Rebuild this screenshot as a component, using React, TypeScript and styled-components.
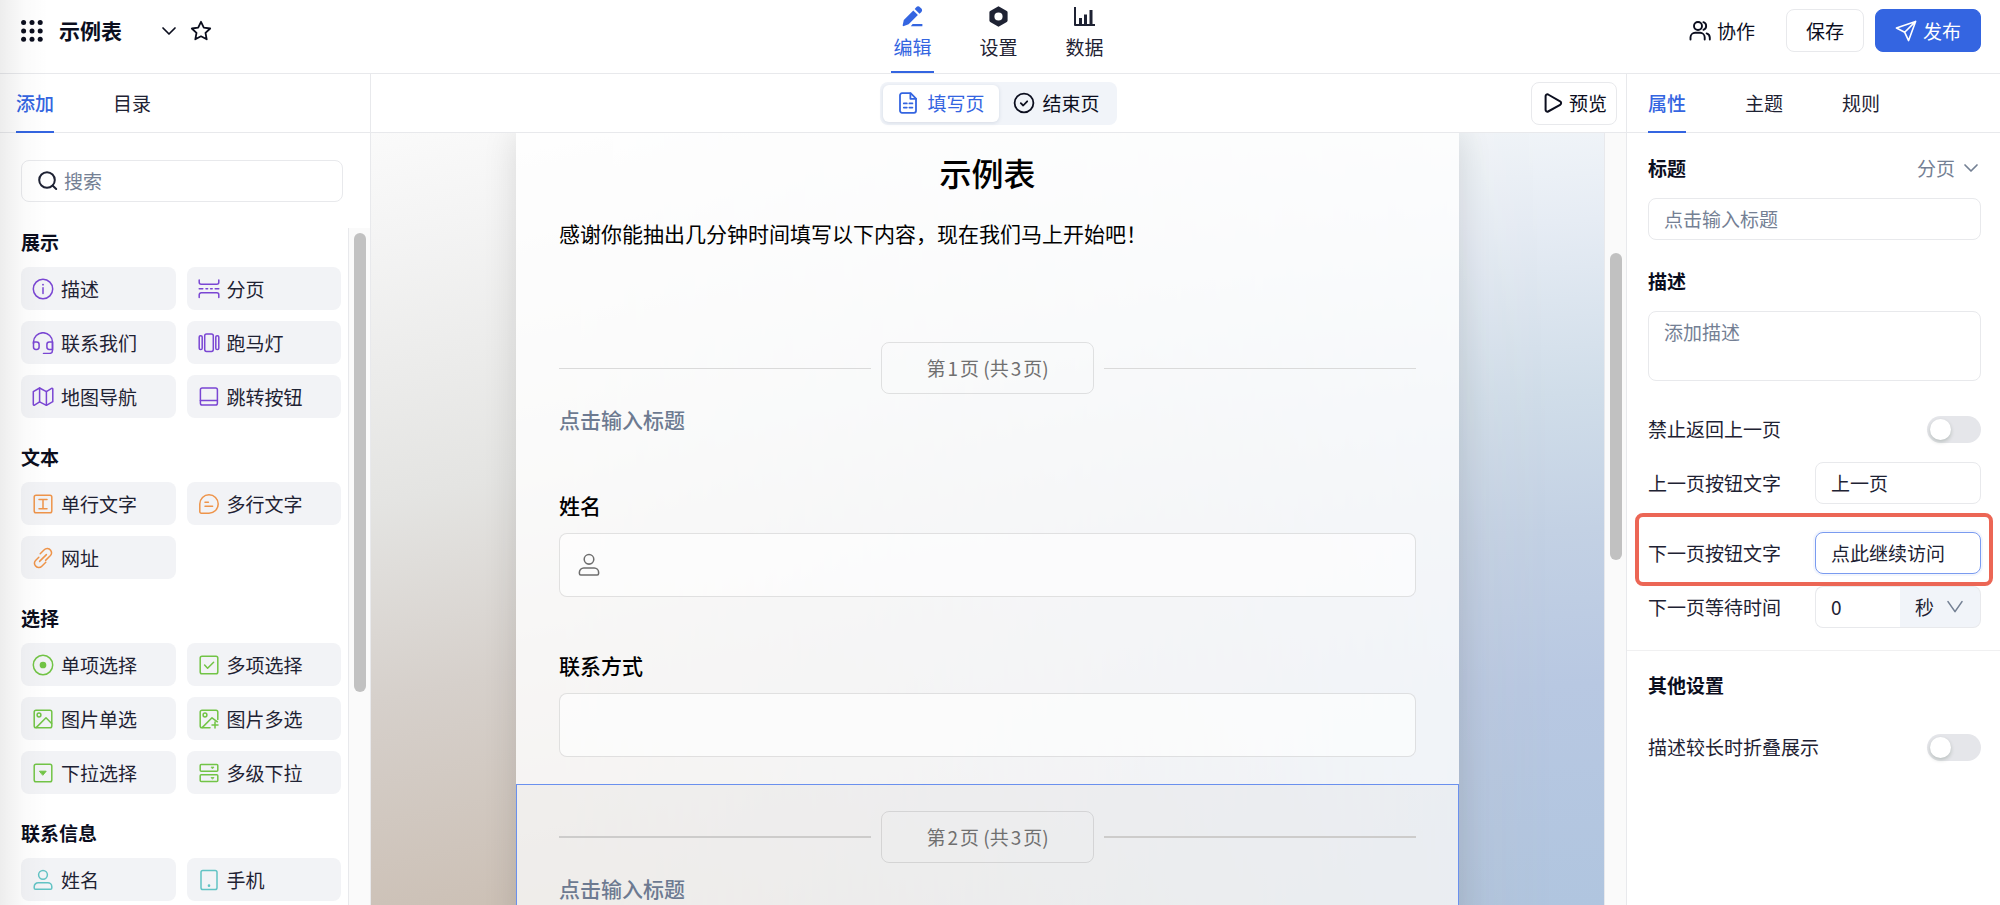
import React, { ReactNode, useState } from "react";
import styled, { createGlobalStyle, css } from "styled-components";

const color = {
  text: "#1e2233",
  strong: "#0b0e1e",
  muted: "#748094",
  primary: "#3465e1",
  line: "#e8e9ec",
  tile: "#f2f3f6",
  soft: "#f1f4f9",
  mark: "#ec6655",
  purple: "#7a46d3",
  orange: "#ee944a",
  green: "#72c446",
  teal: "#62c3c4",
};

const GlobalStyle = createGlobalStyle`
  * { box-sizing: border-box; }
  body { margin: 0; }
  body, button, input, textarea, select {
    font-family: "Noto Sans CJK SC", sans-serif;
    font-size: 19px;
    line-height: 28px;
    color: ${color.text};
  }
  h1, h2, h3, p { margin: 0; }
  button { cursor: pointer; }
`;

/* ---------- shell ---------- */

const Shell = styled.div`
  position: relative;
  display: flex;
  flex-direction: column;
  height: 100vh;
  overflow: hidden;
  background: #fff;

  &::after {
    content: "";
    position: absolute;
    inset: 0 auto 0 0;
    width: 48px;
    pointer-events: none;
    background: linear-gradient(to right, rgba(0, 0, 0, 0.07), rgba(0, 0, 0, 0.02) 50%, transparent);
  }
`;

const Header = styled.header`
  display: grid;
  grid-template-columns: 1fr auto 1fr;
  flex: none;
  height: 74px;
  padding: 0 19px 0 16px;
  border-bottom: 1px solid ${color.line};
`;

const HeaderLeft = styled.div`
  display: flex;
  align-items: center;
  align-self: start;
  height: 62px;
  padding-left: 5px;
`;

const HeaderRight = styled.div`
  display: flex;
  align-items: center;
  align-self: start;
  justify-content: flex-end;
  gap: 11px;
  height: 61px;
`;

const AppName = styled.h1`
  margin: 0 34px 2px 16px;
  font-size: 21px;
  font-weight: 600;
  color: ${color.strong};
`;

const IconButton = styled.button`
  display: flex;
  align-items: center;
  justify-content: center;
  padding: 0 5px;
  border: 0;
  background: none;
  color: ${color.strong};
`;

const MainNav = styled.nav`
  display: flex;
  gap: 43px;
`;

const NavItem = styled.button<{ $active?: boolean }>`
  display: flex;
  flex-direction: column;
  align-items: center;
  gap: 6px;
  width: 43px;
  padding: 6px 0 0;
  border: 0;
  border-bottom: 2px solid ${(p) => (p.$active ? color.primary : "transparent")};
  background: none;
  white-space: nowrap;
  color: ${(p) => (p.$active ? color.primary : color.text)};
`;

const Button = styled.button<{ $kind?: "plain" | "primary" | "text" }>`
  display: flex;
  align-items: center;
  justify-content: center;
  gap: 6px;
  height: 43px;
  padding: 0 19px;
  border: 1px solid ${color.line};
  border-radius: 8px;
  background: #fff;
  color: ${color.strong};
  ${(p) =>
    p.$kind === "primary" &&
    css`
      border-color: ${color.primary};
      background: ${color.primary};
      color: #fff;
    `}
  ${(p) =>
    p.$kind === "text" &&
    css`
      border-color: transparent;
    `}
`;

const Body = styled.div`
  display: flex;
  flex: 1;
  min-height: 0;
`;

const TabBar = styled.div<{ $inset: number }>`
  display: flex;
  flex: none;
  gap: 59px;
  height: 59px;
  padding-left: ${(p) => p.$inset}px;
  border-bottom: 1px solid ${color.line};
`;

const Tab = styled.button<{ $active?: boolean }>`
  margin-bottom: -1px;
  padding: 0;
  border: 0;
  border-bottom: 2px solid ${(p) => (p.$active ? color.primary : "transparent")};
  background: none;
  color: ${(p) => (p.$active ? color.primary : color.text)};
  font-weight: ${(p) => (p.$active ? 500 : 400)};
`;

const ScrollTrack = styled.div`
  flex: none;
  width: 22px;
  padding-left: 5px;
  border-left: 1px solid ${color.line};
  background: #fafafa;
`;

const ScrollThumb = styled.div<{ $top: number; $length: number }>`
  width: 12px;
  height: ${(p) => p.$length}px;
  margin-top: ${(p) => p.$top}px;
  border-radius: 6px;
  background: #c1c1c1;
`;

/* ---------- left palette ---------- */

const Sidebar = styled.aside`
  display: flex;
  flex-direction: column;
  flex: none;
  width: 371px;
  border-right: 1px solid ${color.line};
`;

const SearchBox = styled.label`
  display: flex;
  align-items: center;
  flex: none;
  gap: 6px;
  height: 42px;
  margin: 27px 27px 26px 21px;
  padding: 0 16px;
  border: 1px solid ${color.line};
  border-radius: 8px;
`;

const SearchInput = styled.input`
  flex: 1;
  min-width: 0;
  padding: 0;
  border: 0;
  outline: 0;
  background: none;
  &::placeholder { color: ${color.muted}; }
`;

const PaletteScroll = styled.div`
  display: flex;
  flex: 1;
  min-height: 0;
`;

const PaletteList = styled.div`
  display: flex;
  flex-direction: column;
  flex: 1;
  gap: 25px;
  padding: 0 7px 0 21px;
  overflow: hidden;
`;

const PaletteGroup = styled.section`
  flex: none;
`;

const GroupTitle = styled.h2`
  margin-bottom: 11px;
  font-size: 19px;
  line-height: 28px;
  font-weight: 600;
  color: ${color.strong};
`;

const TileGrid = styled.div`
  display: grid;
  grid-template-columns: 1fr 1fr;
  gap: 11px;
`;

const Tile = styled.button`
  display: flex;
  align-items: center;
  gap: 7px;
  height: 43px;
  padding: 0 11px;
  border: 0;
  border-radius: 8px;
  background: ${color.tile};
  white-space: nowrap;
`;

/* ---------- centre ---------- */

const Center = styled.main`
  display: flex;
  flex-direction: column;
  flex: 1;
  min-width: 0;
`;

const ModeBar = styled.div`
  display: grid;
  grid-template-columns: 1fr auto 1fr;
  align-items: center;
  flex: none;
  height: 59px;
  padding: 0 9px;
  border-bottom: 1px solid ${color.line};
`;

const ModeSwitch = styled.div`
  display: flex;
  grid-column: 2;
  height: 43px;
  padding: 3px;
  border-radius: 8px;
  background: ${color.soft};
`;

const ModeButton = styled.button<{ $active?: boolean }>`
  display: flex;
  align-items: center;
  gap: 8px;
  padding: 0 14px;
  border: 0;
  border-radius: 6px;
  background: ${(p) => (p.$active ? "#fff" : "transparent")};
  box-shadow: ${(p) => (p.$active ? "0 1px 4px rgba(20, 40, 80, 0.12)" : "none")};
  color: ${(p) => (p.$active ? color.primary : color.strong)};
`;

const PreviewButton = styled(Button)`
  justify-self: end;
  padding: 0 9px;
`;

const CanvasArea = styled.div`
  display: flex;
  flex: 1;
  min-height: 0;
`;

const Canvas = styled.div`
  position: relative;
  isolation: isolate;
  flex: 1;
  min-width: 0;
  padding: 0 145px;
  overflow: hidden;
  background: linear-gradient(
    176deg,
    #f6f9fb 0%,
    #f0f4f8 9%,
    #e6ecf4 20%,
    #d0dde9 40%,
    #c3d1e4 56%,
    #b8c8e2 74%,
    #b0c5df 100%
  );

  &::before {
    content: "";
    position: absolute;
    z-index: -1;
    inset: 0;
    background: linear-gradient(
      168deg,
      #fafafa 0%,
      #f4f4f4 10%,
      #e4e4e2 36%,
      #d6d0cb 55%,
      #cdc2b8 75%,
      #c6b7a5 92%,
      #c2b29f 100%
    );
    mask-image: linear-gradient(to right, #000 15%, transparent 96%);
  }
`;

const Form = styled.form`
  min-height: 100%;
  background: rgba(255, 255, 255, 0.8);
  box-shadow: 0 0 32px rgba(0, 0, 0, 0.12);
`;

const FormIntro = styled.section`
  display: flex;
  flex-direction: column;
  gap: 21px;
  padding: 15px 43px 66px;
`;

const FormTitle = styled.h2`
  font-size: 32px;
  line-height: 48px;
  font-weight: 500;
  text-align: center;
  color: #000;
`;

const FormText = styled.p`
  font-size: 21px;
  line-height: 32px;
  color: #000;
`;

const PageSection = styled.section<{ $selected?: boolean }>`
  display: flex;
  flex-direction: column;
  gap: 9px;
  padding: 27px 43px 29px;
  ${(p) =>
    p.$selected &&
    css`
      box-shadow: inset 0 0 0 1px #6a90ee;
      background: rgba(0, 0, 0, 0.024);
    `}
`;

const PageMark = styled.div<{ $selected?: boolean }>`
  display: flex;
  align-items: center;
  gap: 10px;

  &::before,
  &::after {
    content: "";
    flex: 1;
    height: ${(p) => (p.$selected ? 2 : 1)}px;
    background: ${(p) => (p.$selected ? "#cdcccb" : "#dadada")};
  }
`;

const PageBadge = styled.div`
  padding: 11px 44px;
  border: 1px solid rgba(0, 0, 0, 0.1);
  border-radius: 8px;
  color: #707070;
`;

const PageNumber = styled.span`
  margin: 0 2px;
`;

const PageTitle = styled.h3`
  font-size: 21px;
  line-height: 32px;
  font-weight: 500;
  color: #6d7a91;
`;

const Field = styled.label`
  display: flex;
  flex-direction: column;
  gap: 12px;
  padding: 25px 43px 27px;
`;

const FieldName = styled.span`
  font-size: 21px;
  line-height: 32px;
  font-weight: 500;
  color: #000;
`;

const FieldBox = styled.span`
  display: flex;
  align-items: center;
  gap: 10px;
  height: 64px;
  padding: 0 17px;
  border: 1px solid rgba(0, 0, 0, 0.11);
  border-radius: 8px;
  background: rgba(255, 255, 255, 0.6);
  color: #6e6e6e;
`;

/* ---------- right inspector ---------- */

const Inspector = styled.aside`
  display: flex;
  flex-direction: column;
  flex: none;
  width: 374px;
  border-left: 1px solid ${color.line};
`;

const Panel = styled.section`
  display: flex;
  flex-direction: column;
  gap: 12px;
  padding: 21px 19px 22px 21px;
  & + & {
    gap: 27px;
    padding-top: 20px;
    border-top: 1px solid #f0f0f1;
  }
`;

const PanelHead = styled.div`
  display: flex;
  align-items: center;
  justify-content: space-between;
`;

const PanelLabel = styled.label`
  font-weight: 600;
  color: ${color.strong};
`;

const PanelTitle = styled.h2`
  font-size: 19px;
  line-height: 28px;
  font-weight: 600;
  color: ${color.strong};
`;

const KindButton = styled.button`
  display: flex;
  align-items: center;
  gap: 8px;
  padding: 0 2px;
  border: 0;
  background: none;
  color: ${color.muted};
`;

const inputStyle = css`
  width: 100%;
  padding: 0 15px 1px;
  border: 1px solid ${color.line};
  border-radius: 8px;
  outline: 0;
  background: #fff;
  &::placeholder { color: ${color.muted}; opacity: 1; }
`;

const TextInput = styled.input<{ $focused?: boolean }>`
  ${inputStyle}
  height: 42px;
  ${(p) =>
    p.$focused &&
    css`
      border-color: #7a9bf0;
      box-shadow: 0 0 0 2px rgba(52, 101, 225, 0.06);
    `}
`;

const TextArea = styled.textarea`
  ${inputStyle}
  display: block;
  height: 70px;
  padding-top: 6px;
  resize: none;
`;

const Group = styled.div`
  display: flex;
  flex-direction: column;
  gap: 16px;
  margin-bottom: 15px;
`;

const Row = styled.div<{ $marked?: boolean }>`
  position: relative;
  display: flex;
  align-items: center;
  justify-content: space-between;
  min-height: 42px;
  ${(p) =>
    p.$marked &&
    css`
      margin-top: 16px;
      &::after {
        content: "";
        position: absolute;
        inset: -19px -12px -12px -13px;
        border: 4px solid ${color.mark};
        border-radius: 8px;
        pointer-events: none;
      }
    `}
`;

const Control = styled.div`
  display: flex;
  width: 166px;
`;

const NumberInput = styled(TextInput)`
  flex: 1;
  width: 0;
  border-right: 0;
  border-radius: 8px 0 0 8px;
`;

const UnitBox = styled.div`
  position: relative;
  display: flex;
  width: 81px;
  svg {
    position: absolute;
    right: 17px;
    top: 12px;
    color: ${color.muted};
    pointer-events: none;
  }
`;

const UnitSelect = styled.select`
  width: 100%;
  padding: 0 15px;
  border: 1px solid ${color.line};
  border-left: 0;
  border-radius: 0 8px 8px 0;
  outline: 0;
  appearance: none;
  background: ${color.soft};
`;

const Switch = styled.input`
  appearance: none;
  flex: none;
  width: 54px;
  height: 27px;
  margin: 0;
  padding: 3px;
  border-radius: 14px;
  background: #e5e6ea;
  cursor: pointer;

  &::before {
    content: "";
    display: block;
    width: 21px;
    height: 21px;
    border-radius: 50%;
    background: #fff;
    box-shadow: 0 2px 4px rgba(0, 35, 11, 0.2);
  }
  &:checked { background: ${color.primary}; }
  &:checked::before { margin-left: auto; }
`;

/* ---------- icons ---------- */

const Svg = styled.svg`
  display: block;
  flex: none;
  fill: none;
  stroke: currentColor;
  stroke-linecap: round;
  stroke-linejoin: round;
`;

function Icon({ size = 22, box = 22, tint, weight = 1.5, children }: {
  size?: number; box?: number; tint?: string; weight?: number; children: ReactNode;
}) {
  return (
    <Svg width={size} height={size} viewBox={`0 0 ${box} ${box}`} color={tint} strokeWidth={weight} aria-hidden="true">
      {children}
    </Svg>
  );
}

const person = (
  <>
    <circle cx="11" cy="5.8" r="4.4" />
    <path d="M2.2 18.9v-1.2a4 4 0 0 1 4-4h9.6a4 4 0 0 1 4 4v1.2a1.3 1.3 0 0 1-1.3 1.3H3.5a1.3 1.3 0 0 1-1.3-1.3z" />
  </>
);
const square = <rect x="2.2" y="2.2" width="17.6" height="17.6" rx="1.8" />;

const glyphs: Record<string, ReactNode> = {
  info: (<><circle cx="11" cy="11" r="9.7" /><path d="M11 9.8v5.6" /><path d="M11 6.6v.1" strokeWidth="1.8" /></>),
  pageBreak: (
    <>
      <path d="M1.2 2v2.2a2 2 0 0 0 2 2h15.6a2 2 0 0 0 2-2V2" />
      <path d="M1.2 19.4v-2.6a2 2 0 0 1 2-2h15.6a2 2 0 0 1 2 2v2.6" />
      <path d="M1.2 10.8h3.6M8 10.8h1.6M12.6 10.8h1.6M17.2 10.8h3.6" />
    </>
  ),
  headset: (
    <>
      <path d="M1.5 11.5V10a9.5 9.3 0 0 1 19 0v8.4a3 3 0 0 1-3 3H11.5" />
      <path d="M1.5 10h3.2a2.4 2.4 0 0 1 2.4 2.4v2.7a2.4 2.4 0 0 1-2.4 2.4H3.9a2.4 2.4 0 0 1-2.4-2.4z" />
      <path d="M20.5 10h-3.2a2.4 2.4 0 0 0-2.4 2.4v2.7a2.4 2.4 0 0 0 2.4 2.4h3.2z" />
    </>
  ),
  carousel: (<><rect x="6.7" y="2" width="8.6" height="17.4" rx="1.8" /><rect x="1.2" y="3.8" width="3" height="13.8" rx="1.3" /><rect x="17.8" y="3.8" width="3" height="13.8" rx="1.3" /></>),
  map: (<><path d="M1.3 5.6 7.6 2l6.8 3.6L19.6 2.4a.8.8 0 0 1 1.2.7v12.6l-6.4 3.6-6.8-3.4-5.1 3.2a.8.8 0 0 1-1.2-.7z" /><path d="M7.6 2v13.9M14.4 5.6v13.7" /></>),
  panelBottom: (<><rect x="2.4" y="2" width="17" height="17" rx="1.8" /><path d="M2.4 14.6h17" /></>),
  inputText: (<>{square}<path d="M7 6.4h8M7 15.8h8M11 6.4v9.4" /></>),
  bubble: (<><path d="M1.8 11A9.2 9.2 0 1 1 11 20.2H3.3a1.5 1.5 0 0 1-1.5-1.5z" /><path d="M7 9.3h3.4M7 13.3h7.6" /></>),
  link: (
    <>
      <path d="m8.2 6.8 4-4a4.1 4.1 0 0 1 6.4.4 4.4 4.4 0 0 1-.4 5.6l-4.6 4.6" />
      <path d="m13.8 15.2-4 4a4.1 4.1 0 0 1-6.4-.4 4.4 4.4 0 0 1 .4-5.6l3-3" />
      <path d="m7.6 14.4 6.8-6.8" />
    </>
  ),
  radio: (<><circle cx="11" cy="11" r="9.7" /><circle cx="11" cy="11" r="2.6" fill="currentColor" /></>),
  check: (<>{square}<path d="m6.6 11 3 3.2 6-6" /></>),
  image: (<>{square}<circle cx="7" cy="7" r="1.9" /><path d="m4.4 19.4 9.6-9.6 5.6 5.8" /></>),
  imagePlus: (
    <>
      <path d="M19.8 11.5V4a1.8 1.8 0 0 0-1.8-1.8H4A1.8 1.8 0 0 0 2.2 4v14A1.8 1.8 0 0 0 4 19.8h8" />
      <circle cx="7" cy="7" r="1.9" />
      <path d="m4.4 19.4 9.6-9.6 5.4 4M17 14v6M14 17h6" />
    </>
  ),
  dropdown: (<>{square}<path d="M7.8 9.2h6.4L11 13z" fill="currentColor" strokeWidth="1" /></>),
  cascade: (
    <>
      <rect x="2.2" y="2.4" width="17.6" height="6.8" rx="1" />
      <rect x="2.2" y="12.8" width="17.6" height="6.8" rx="1" />
      <path d="M13.4 5.1h2.6l-1.3 1.5zM13.4 15.5h2.6L14.7 17z" fill="currentColor" strokeWidth="0.8" />
    </>
  ),
  person,
  phone: (<><rect x="3" y="1.4" width="16" height="19.2" rx="1.8" /><path d="M11 16.6v.1" strokeWidth="2.6" /></>),
};

const palette = [
  { title: "展示", tint: color.purple, items: [["info", "描述"], ["pageBreak", "分页"], ["headset", "联系我们"], ["carousel", "跑马灯"], ["map", "地图导航"], ["panelBottom", "跳转按钮"]] },
  { title: "文本", tint: color.orange, items: [["inputText", "单行文字"], ["bubble", "多行文字"], ["link", "网址"]] },
  { title: "选择", tint: color.green, items: [["radio", "单项选择"], ["check", "多项选择"], ["image", "图片单选"], ["imagePlus", "图片多选"], ["dropdown", "下拉选择"], ["cascade", "多级下拉"]] },
  { title: "联系信息", tint: color.teal, items: [["person", "姓名"], ["phone", "手机"]] },
];

function PageBreak({ page, total, selected }: { page: number; total: number; selected?: boolean }) {
  return (
    <PageSection $selected={selected}>
      <PageMark $selected={selected}>
        <PageBadge>
          第<PageNumber>{page}</PageNumber>页 (共<PageNumber>{total}</PageNumber>页)
        </PageBadge>
      </PageMark>
      <PageTitle>点击输入标题</PageTitle>
    </PageSection>
  );
}

function TopBar() {
  return (
    <Header>
      <HeaderLeft>
        <Icon>
          {[2.6, 11, 19.2].map((y) =>
            [2.6, 11, 19.2].map((x) => (
              <circle key={`${x}-${y}`} cx={x} cy={y} r="2.5" fill={color.strong} stroke="none" />
            ))
          )}
        </Icon>
        <AppName>示例表</AppName>
        <IconButton aria-label="展开">
          <Icon size={16} box={16} weight={1.7}><path d="m2 5 6 6 6-6" /></Icon>
        </IconButton>
        <IconButton aria-label="收藏">
          <Icon size={28} box={28} weight={1.8}>
            <path d="m14 4.8 2.8 5.8 6.4.9-4.7 4.4 1.2 6.4-5.7-3-5.7 3 1.2-6.4-4.7-4.4 6.4-.9z" />
          </Icon>
        </IconButton>
      </HeaderLeft>
      <MainNav>
        <NavItem $active>
          <Icon size={21} box={21}>
            <g fill="currentColor" stroke="none">
              <path d="M1.3 20.2.6 19.6l1.2-5.6L11.3 4.4l4.6 4.6-9.3 9.3z" />
              <path d="m12.7 3 1.3-1.6a3 3 0 0 1 4.2 0l1 .9a3 3 0 0 1 0 4L17.5 7.7z" />
              <path d="M10.6 18.1h9.8v2.1H8.8z" />
            </g>
          </Icon>
          编辑
        </NavItem>
        <NavItem>
          <Icon size={21} box={21}>
            <path fill="currentColor" stroke="none" fillRule="evenodd" d="M10.5.2 18.8 5a1.6 1.6 0 0 1 .8 1.4v8.2a1.6 1.6 0 0 1-.8 1.4l-8.3 4.8L2.2 16a1.6 1.6 0 0 1-.8-1.4V6.4A1.6 1.6 0 0 1 2.2 5zm0 6.2a4.1 4.1 0 1 0 0 8.2 4.1 4.1 0 0 0 0-8.2z" />
          </Icon>
          设置
        </NavItem>
        <NavItem>
          <Icon size={21} box={21}>
            <path d="M1 2v17h19" strokeWidth="2" strokeLinecap="square" />
            <path d="M6.5 18v-6M11.5 18V8.6M17 18V4" strokeWidth="3" strokeLinecap="butt" />
          </Icon>
          数据
        </NavItem>
      </MainNav>
      <HeaderRight>
        <Button $kind="text">
          <Icon weight={1.9}>
            <circle cx="9" cy="6" r="4" />
            <path d="M1.5 19.5v-2.3a4.6 4.6 0 0 1 4.6-4.4h5a4.6 4.6 0 0 1 4.6 4.4v2.3M14.4 2.2a4 4 0 0 1 0 7.6M17.6 13.4a4.6 4.6 0 0 1 3.2 4.2v1.9" />
          </Icon>
          协作
        </Button>
        <Button>保存</Button>
        <Button $kind="primary">
          <Icon weight={1.6}>
            <path d="M20.6 1.4 1.4 8l8.3 4.3 3.9 8.3zM9.7 12.3 20.6 1.4" />
          </Icon>
          发布
        </Button>
      </HeaderRight>
    </Header>
  );
}

function ElementPalette() {
  return (
    <Sidebar>
      <TabBar $inset={16}>
        <Tab $active>添加</Tab>
        <Tab>目录</Tab>
      </TabBar>
      <SearchBox>
        <Icon size={20} box={20} weight={2}><circle cx="9" cy="9" r="7.8" /><path d="m14.8 14.8 3.4 3.2" /></Icon>
        <SearchInput placeholder="搜索" aria-label="搜索" />
      </SearchBox>
      <PaletteScroll>
        <PaletteList>
          {palette.map((group) => (
            <PaletteGroup key={group.title}>
              <GroupTitle>{group.title}</GroupTitle>
              <TileGrid>
                {group.items.map(([glyph, name]) => (
                  <Tile key={name}>
                    <Icon tint={group.tint}>{glyphs[glyph]}</Icon>
                    {name}
                  </Tile>
                ))}
              </TileGrid>
            </PaletteGroup>
          ))}
        </PaletteList>
        <ScrollTrack><ScrollThumb $top={5} $length={459} /></ScrollTrack>
      </PaletteScroll>
    </Sidebar>
  );
}

function Editor() {
  return (
    <Center>
      <ModeBar>
        <ModeSwitch>
          <ModeButton $active>
            <Icon>
              <path d="M3 3.2a2 2 0 0 1 2-2h8.6L19 6.6v12.2a2 2 0 0 1-2 2H5a2 2 0 0 1-2-2z" strokeWidth="1.8" />
              <path d="M13.4 1.4v5.4H19M6.8 11.4h3M12.4 11.4h3M6.8 15.6h3M12.4 15.6h3" strokeWidth="1.8" />
            </Icon>
            填写页
          </ModeButton>
          <ModeButton>
            <Icon weight={1.8}><circle cx="11" cy="11" r="9.4" /><path d="m7.8 11.2 2.4 2.3 4-4.2" /></Icon>
            结束页
          </ModeButton>
        </ModeSwitch>
        <PreviewButton>
          <Icon weight={2}>
            <path d="M4.6 4v14a1.7 1.7 0 0 0 2.5 1.5l12-6.7a2 2 0 0 0 0-3.5l-12-6.8A1.7 1.7 0 0 0 4.6 4z" />
          </Icon>
          预览
        </PreviewButton>
      </ModeBar>
      <CanvasArea>
        <Canvas>
          <Form>
            <FormIntro>
              <FormTitle>示例表</FormTitle>
              <FormText>感谢你能抽出几分钟时间填写以下内容，现在我们马上开始吧！</FormText>
            </FormIntro>
            <PageBreak page={1} total={3} />
            <Field>
              <FieldName>姓名</FieldName>
              <FieldBox>
                <Icon size={24} weight={1.4}>{person}</Icon>
                <SearchInput aria-label="姓名" />
              </FieldBox>
            </Field>
            <Field>
              <FieldName>联系方式</FieldName>
              <FieldBox><SearchInput aria-label="联系方式" /></FieldBox>
            </Field>
            <PageBreak page={2} total={3} selected />
          </Form>
        </Canvas>
        <ScrollTrack><ScrollThumb $top={120} $length={307} /></ScrollTrack>
      </CanvasArea>
    </Center>
  );
}

function Properties() {
  const [prev, setPrev] = useState("上一页");
  const [next, setNext] = useState("点此继续访问");
  const [wait, setWait] = useState("0");
  return (
    <Inspector>
      <TabBar $inset={21}>
        <Tab $active>属性</Tab>
        <Tab>主题</Tab>
        <Tab>规则</Tab>
      </TabBar>
      <Panel>
        <Group>
          <PanelHead>
            <PanelLabel htmlFor="title">标题</PanelLabel>
            <KindButton>
              分页
              <Icon size={16} box={16} weight={1.7}><path d="m2 5 6 6 6-6" /></Icon>
            </KindButton>
          </PanelHead>
          <TextInput id="title" placeholder="点击输入标题" />
        </Group>
        <Group>
          <PanelLabel htmlFor="desc">描述</PanelLabel>
          <TextArea id="desc" placeholder="添加描述" />
        </Group>
        <Row>
          <label htmlFor="noback">禁止返回上一页</label>
          <Switch id="noback" type="checkbox" />
        </Row>
        <Row>
          <label htmlFor="prev">上一页按钮文字</label>
          <Control><TextInput id="prev" value={prev} onChange={(e) => setPrev(e.target.value)} /></Control>
        </Row>
        <Row $marked>
          <label htmlFor="next">下一页按钮文字</label>
          <Control><TextInput id="next" $focused value={next} onChange={(e) => setNext(e.target.value)} /></Control>
        </Row>
        <Row>
          <label htmlFor="wait">下一页等待时间</label>
          <Control>
            <NumberInput id="wait" inputMode="numeric" value={wait} onChange={(e) => setWait(e.target.value)} />
            <UnitBox>
              <UnitSelect aria-label="时间单位"><option>秒</option></UnitSelect>
              <Icon size={18} box={18} weight={1.6}><path d="m2 3.6 7 10 7-10" /></Icon>
            </UnitBox>
          </Control>
        </Row>
      </Panel>
      <Panel>
        <PanelTitle>其他设置</PanelTitle>
        <Row>
          <label htmlFor="fold">描述较长时折叠展示</label>
          <Switch id="fold" type="checkbox" />
        </Row>
      </Panel>
    </Inspector>
  );
}

export default function App() {
  return (
    <Shell>
      <GlobalStyle />
      <TopBar />
      <Body>
        <ElementPalette />
        <Editor />
        <Properties />
      </Body>
    </Shell>
  );
}
